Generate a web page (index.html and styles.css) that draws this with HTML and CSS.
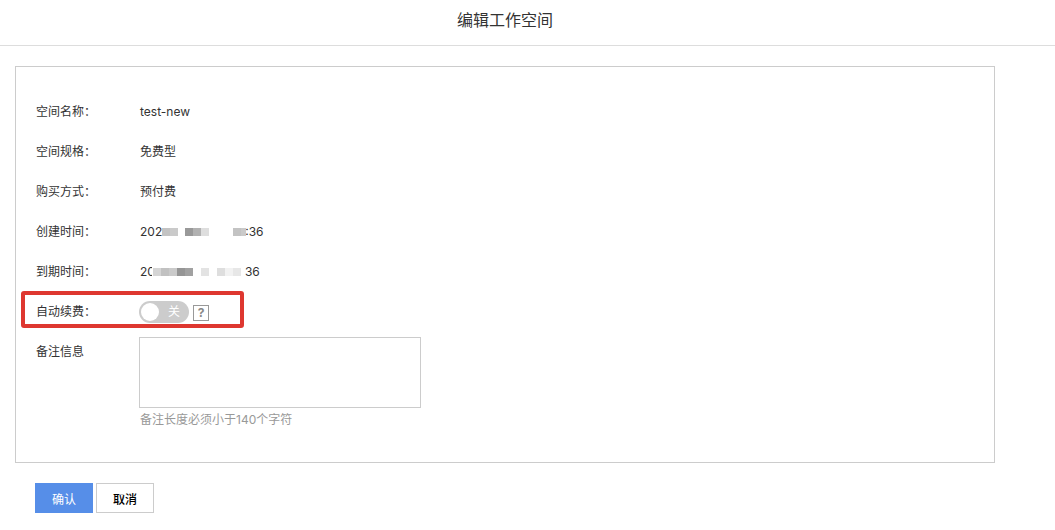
FILE: index.html
```html
<!DOCTYPE html>
<html lang="zh-CN">
<head>
    <meta charset="UTF-8">
    <title>编辑工作空间</title>
    <link rel="stylesheet" href="styles.css">
</head>
<body>
    <header class="page-header">
        <h1>编辑工作空间</h1>
    </header>

    <form class="workspace-form">
        <div class="panel">
            <div class="row">
                <span class="label">空间名称：</span>
                <span class="value">test-new</span>
            </div>
            <div class="row">
                <span class="label">空间规格：</span>
                <span class="value">免费型</span>
            </div>
            <div class="row">
                <span class="label">购买方式：</span>
                <span class="value">预付费</span>
            </div>
            <div class="row">
                <span class="label">创建时间：</span>
                <span class="value">202<svg class="mask" width="83" height="8" viewBox="0 0 83 8" shape-rendering="crispEdges" aria-hidden="true">
                    <rect width="8" height="8" fill="#c3c3c3"/>
                    <rect x="8" width="8" height="8" fill="#cacaca"/>
                    <rect x="23" width="8" height="8" fill="#999"/>
                    <rect x="31" width="8" height="8" fill="#b1b1b1"/>
                    <rect x="39" width="8" height="8" fill="#dedede"/>
                    <rect x="71" width="8" height="8" fill="#c3c3c3"/>
                    <rect x="79" width="5" height="8" fill="#cacaca"/>
                </svg>:36</span>
            </div>
            <div class="row">
                <span class="label">到期时间：</span>
                <span class="value">20<svg class="mask mask-over" width="93" height="8" viewBox="0 0 93 8" shape-rendering="crispEdges" aria-hidden="true">
                    <rect y="-2" width="8" height="12" fill="#fff"/>
                    <rect x="1" width="8" height="8" fill="#d5d5d5"/>
                    <rect x="9" width="8" height="8" fill="#c1c1c1"/>
                    <rect x="17" width="8" height="8" fill="#cacaca"/>
                    <rect x="25" width="8" height="8" fill="#959595"/>
                    <rect x="33" width="8" height="8" fill="#a1a1a1"/>
                    <rect x="49" width="8" height="8" fill="#e3e3e3"/>
                    <rect x="65" width="8" height="8" fill="#dedede"/>
                    <rect x="73" width="8" height="8" fill="#f2f2f2"/>
                    <rect x="81" width="8" height="8" fill="#e7e7e7"/>
                </svg>36</span>
            </div>
            <div class="row highlight">
                <label class="label" for="autoRenew">自动续费：</label>
                <span class="control">
                    <span class="switch">
                        <input type="checkbox" id="autoRenew">
                        <span class="switch-text">关</span>
                    </span>
                    <button type="button" class="help">?</button>
                </span>
            </div>
            <div class="row row-note">
                <label class="label" for="note">备注信息</label>
                <div class="note">
                    <textarea id="note"></textarea>
                    <p class="hint">备注长度必须小于140个字符</p>
                </div>
            </div>
        </div>

        <div class="actions">
            <button type="submit" class="btn btn-primary">确认</button>
            <button type="button" class="btn">取消</button>
        </div>
    </form>
</body>
</html>
```
FILE: styles.css
```css
*,
*::before,
*::after {
    box-sizing: border-box;
}

body {
    margin: 0;
    font-family: Inter, "Noto Sans CJK SC", sans-serif;
    font-size: 12px;
    line-height: 20px;
    color: #333;
    background: #fff;
}

.page-header {
    padding: 8px 60px 13px 15px;
    border-bottom: 1px solid #ddd;
    text-align: center;
}

.page-header h1 {
    margin: 0;
    font-size: 16px;
    font-weight: normal;
    line-height: 24px;
}

.workspace-form {
    padding: 20px 60px 0 15px;
}

.panel {
    padding: 25px 20px 32px;
    border: 1px solid #ccc;
}

.row {
    display: flex;
    align-items: center;
    min-height: 40px;
    position: relative;
}

.label {
    flex: none;
    width: 103px;
}

.value,
.control {
    display: flex;
    align-items: center;
}

.value,
.hint {
    padding-left: 1px;
}

.mask {
    flex: none;
    position: relative;
    overflow: visible;
}

.mask-over {
    margin-left: -3px;
}

.highlight::after {
    content: '';
    position: absolute;
    top: -1px;
    left: -15px;
    width: 223px;
    height: 37px;
    border: 4px solid #de3730;
    border-radius: 3px;
    pointer-events: none;
}

.switch {
    position: relative;
    display: flex;
    width: 50px;
    height: 22px;
    margin-right: 4px;
}

.switch input {
    appearance: none;
    width: 100%;
    height: 100%;
    margin: 0;
    border-radius: 11px;
    background: #ccc;
    cursor: pointer;
}

.switch input::before {
    content: '';
    display: block;
    width: 18px;
    height: 18px;
    margin: 2px;
    border-radius: 50%;
    background: #fff;
}

.switch-text {
    position: absolute;
    top: 0;
    right: 9px;
    line-height: 22px;
    color: #fff;
    pointer-events: none;
}

.help {
    width: 16px;
    height: 16px;
    margin-top: 2px;
    padding: 0;
    border: 1px solid #999;
    background: #fff;
    color: #888;
    font-family: inherit;
    font-size: 12px;
    font-weight: bold;
    line-height: 14px;
}

.row-note {
    align-items: flex-start;
    padding-top: 5px;
}

.row-note .label {
    padding-top: 5px;
}

.note textarea {
    display: block;
    width: 282px;
    height: 71px;
    padding: 4px;
    border: 1px solid #ccc;
    font: inherit;
    resize: none;
}

.hint {
    margin: 2px 0 0;
    color: #999;
}

.actions {
    display: flex;
    gap: 3px;
    padding: 20px;
}

.btn {
    width: 58px;
    height: 30px;
    padding: 0;
    border: 1px solid #ccc;
    background: #fff;
    color: #000;
    font-family: inherit;
    font-size: 12px;
    font-weight: 500;
    cursor: pointer;
}

.btn-primary {
    border-color: #568ee8;
    background: #568ee8;
    color: #fff;
    font-weight: normal;
}
```
